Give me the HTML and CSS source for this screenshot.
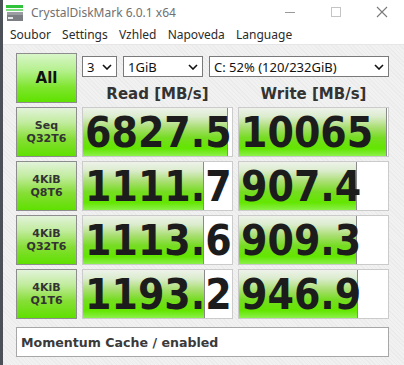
FILE: index.html
```html
<!DOCTYPE html>
<html lang="cs">
<head>
  <meta charset="UTF-8">
  <title>CrystalDiskMark 6.0.1 x64</title>
  <link rel="stylesheet" href="styles.css">
</head>
<body>

  <div class="window">
    <div class="titlebar">
      <svg class="app-icon" width="17" height="16" viewBox="0 0 17 16">
        <rect x="0" y="0" width="17" height="3" fill="#2fc23a"/>
        <rect x="0" y="4" width="17" height="2" fill="#7ddc80"/>
        <rect x="1" y="7" width="16" height="9" fill="#7b7f84"/>
        <rect x="1" y="7" width="16" height="3" fill="#9a9ea3"/>
        <rect x="2" y="12" width="5" height="2" fill="#e8e8e8"/>
      </svg>
      <span class="title">CrystalDiskMark 6.0.1 x64</span>
      <div class="controls">
        <svg width="12" height="12" viewBox="0 0 12 12"><line x1="1" y1="6.5" x2="11" y2="6.5" stroke="#9a9a9a"/></svg>
        <svg width="12" height="12" viewBox="0 0 12 12"><rect x="1.5" y="1.5" width="9" height="9" fill="none" stroke="#c4c4c4"/></svg>
        <svg width="12" height="12" viewBox="0 0 12 12"><path d="M1 1 L11 11 M11 1 L1 11" stroke="#7a7a7a" stroke-width="1.1"/></svg>
      </div>
    </div>

    <div class="menubar">
      <span>Soubor</span>
      <span>Settings</span>
      <span>Vzhled</span>
      <span>Napoveda</span>
      <span>Language</span>
    </div>

    <div class="content">
      <div class="board">
        <button class="all">All</button>

        <div class="selects">
          <div class="combo combo-count">3<svg width="10" height="6" viewBox="0 0 10 6"><polyline points="1,1 5,5 9,1" fill="none" stroke="#111" stroke-width="1.6"/></svg></div>
          <div class="combo combo-size">1GiB<svg width="10" height="6" viewBox="0 0 10 6"><polyline points="1,1 5,5 9,1" fill="none" stroke="#111" stroke-width="1.6"/></svg></div>
          <div class="combo combo-drive">C: 52% (120/232GiB)<svg width="10" height="6" viewBox="0 0 10 6"><polyline points="1,1 5,5 9,1" fill="none" stroke="#111" stroke-width="1.6"/></svg></div>
        </div>

        <div class="head">Read [MB/s]</div>
        <div class="head">Write [MB/s]</div>

        <button class="label">Seq<br>Q32T6</button>
        <div class="cell"><div class="bar" style="width: 97.5%"></div><span class="value">6827.5</span></div>
        <div class="cell"><div class="bar" style="width: 99.5%"></div><span class="value">10065</span></div>

        <button class="label">4KiB<br>Q8T6</button>
        <div class="cell"><div class="bar" style="width: 81.5%"></div><span class="value">1111.7</span></div>
        <div class="cell"><div class="bar" style="width: 79.5%"></div><span class="value">907.4</span></div>

        <button class="label">4KiB<br>Q32T6</button>
        <div class="cell"><div class="bar" style="width: 81.5%"></div><span class="value">1113.6</span></div>
        <div class="cell"><div class="bar" style="width: 79.5%"></div><span class="value">909.3</span></div>

        <button class="label">4KiB<br>Q1T6</button>
        <div class="cell"><div class="bar" style="width: 82%"></div><span class="value">1193.2</span></div>
        <div class="cell"><div class="bar" style="width: 80%"></div><span class="value">946.9</span></div>
      </div>

      <div class="status">Momentum Cache / enabled</div>
    </div>
  </div>

</body>
</html>
```

FILE: styles.css
```css
html, body {
  margin: 0;
  height: 100%;
}

body {
  background: #f0f0f0;
  font-family: "Noto Sans", sans-serif;
}

.window {
  height: 100%;
  border-left: 3px solid #4b5157;
  box-sizing: border-box;
  display: flex;
  flex-direction: column;
}

/* title bar */
.titlebar {
  height: 24px;
  background: #fff;
  display: flex;
  align-items: center;
}

.app-icon {
  margin-left: 3px;
  margin-right: 8px;
  margin-top: 1px;
}

.title {
  font-size: 12px;
  color: #707070;
}

.controls {
  margin-left: auto;
  display: flex;
  gap: 34px;
  margin-right: 16px;
}

/* menu */
.menubar {
  height: 20px;
  background: #fff;
  border-bottom: 1px solid #e6e6e6;
  display: flex;
  align-items: center;
  gap: 11.2px;
  padding-left: 7px;
  font-size: 12px;
  color: #2b2b2b;
}

/* main area */
.content {
  flex: 1;
  padding: 8px 15px 0 13px;
  background: repeating-linear-gradient(45deg, #f1f1f1 0 2px, #ebebeb 2px 3px);
}

.board {
  display: grid;
  grid-template-columns: 61px 151px 151px;
  grid-template-rows: 24px 22px repeat(4, 50px);
  column-gap: 5px;
  row-gap: 4px;
}

.all, .label {
  margin: 0;
  padding: 0;
  border: 1px solid #8d8d8d;
  background: linear-gradient(to bottom, #e2f3da 0%, #c2ec9f 30%, #86de35 65%, #5fe000 100%);
  font-family: "DejaVu Sans", sans-serif;
  font-weight: bold;
  cursor: pointer;
}

.all {
  grid-row: 1 / 3;
  font-size: 15px;
  color: #111;
  background: linear-gradient(to bottom, #d9f6c9 0%, #b4f08c 35%, #7ee52c 70%, #5fe200 100%);
}

.label {
  font-size: 11px;
  line-height: 13px;
  color: #333;
}

.selects {
  grid-column: 2 / 4;
  display: flex;
  gap: 6px;
  align-self: end;
}

.combo {
  height: 21px;
  box-sizing: border-box;
  border: 1px solid #7a7a7a;
  background: #fff;
  display: flex;
  align-items: center;
  justify-content: space-between;
  padding: 0 4px 0 4px;
  font-size: 13px;
  color: #111;
}

.combo-count { width: 35px; }
.combo-size { width: 80px; }
.combo-drive { flex: 1; }

.head {
  font-family: "DejaVu Sans", sans-serif;
  font-weight: bold;
  font-size: 15px;
  color: #333;
  text-align: center;
  align-self: end;
  line-height: 18px;
}

.cell {
  border: 1px solid #cbcbcb;
  background: #fff;
  display: grid;
  overflow: hidden;
}

.bar, .value {
  grid-area: 1 / 1;
}

.bar {
  height: 100%;
  box-sizing: border-box;
  border-right: 1px solid #8a8a8a;
  background: linear-gradient(to bottom, #eef2ea 0%, #dbeccd 18%, #a6de6c 42%, #76dc22 62%, #63e600 84%, #8bf04a 100%);
}

.value {
  font-family: "DejaVu Sans", sans-serif;
  font-weight: bold;
  font-size: 38px;
  color: #1c1c1c;
  padding-left: 2px;
  align-self: center;
  line-height: 1;
  white-space: nowrap;
  transform: scaleY(1.12);
}

.status {
  width: 373px;
  height: 30px;
  box-sizing: border-box;
  margin-top: 8px;
  border: 1px solid #a7a7a7;
  background: #fff;
  display: flex;
  align-items: center;
  padding-left: 4px;
  font-family: "DejaVu Sans", sans-serif;
  font-weight: bold;
  font-size: 12.6px;
  color: #3a3a3a;
}
```
